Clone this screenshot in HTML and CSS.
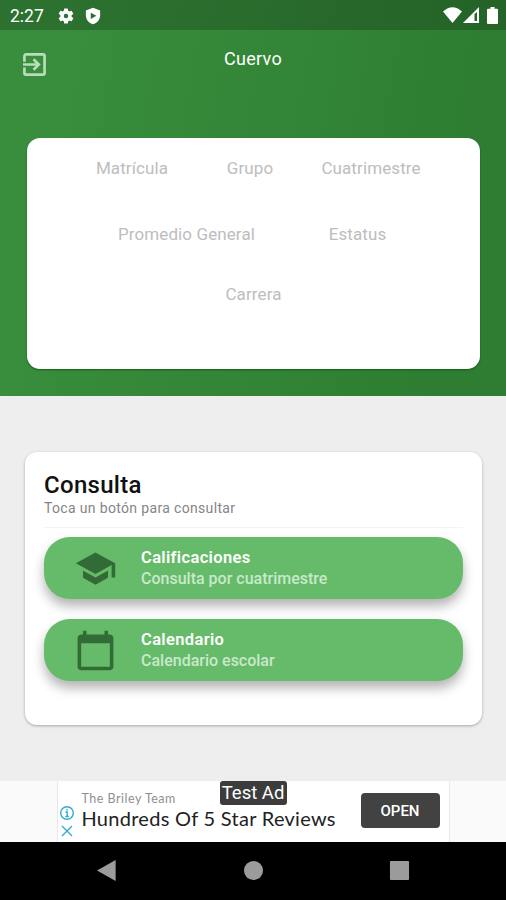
FILE: index.html
```html
<!DOCTYPE html>
<html lang="es">
  <head>
    <meta charset="UTF-8" />
    <meta name="viewport" content="width=device-width, initial-scale=1.0" />
    <title>Cuervo</title>
    <link rel="stylesheet" href="styles.css">
  </head>
  <body>
    <header class="header">
      <div class="status-bar">
        <span class="time">2:27</span>
        <svg class="status-gear" viewBox="0 0 24 24">
          <path fill-rule="evenodd" d="M19.4 13a7.500 7.500 0 0 0 0-2l2.100-1.650a.5.5 0 0 0 .12-.64l-2-3.460a.5.5 0 0 0-.61-.22l-2.490 1a7.300 7.300 0 0 0-1.690-.98l-.38-2.650A.49.49 0 0 0 14 2h-4a.49.49 0 0 0-.49.42l-.38 2.650c-.61.25-1.170.59-1.690.98l-2.490-1a.5.5 0 0 0-.61.22l-2 3.460a.5.5 0 0 0 .12.64L4.570 11a7.900 7.900 0 0 0 0 2l-2.110 1.650a.5.5 0 0 0-.12.64l2 3.460c.12.22.39.3.61.22l2.490-1c.52.4 1.080.73 1.690.98l.38 2.650c.03.24.24.42.49.42h4c.25 0 .46-.18.49-.42l.38-2.650c.61-.25 1.170-.59 1.690-.98l2.490 1c.23.09.49 0 .61-.22l2-3.460a.5.5 0 0 0-.12-.64zM12 15a3 3 0 1 1 0-6 3 3 0 0 1 0 6z" />
        </svg>
        <svg class="status-shield" viewBox="0 0 24 24">
          <path fill-rule="evenodd" d="M12 1 2.500 4.500V11c0 5.800 4 10.500 9.500 12 5.500-1.500 9.500-6.200 9.500-12V4.500zM9 7.500l7.500 4.300L9 16z" />
        </svg>
        <div class="status-right">
          <svg width="19" height="16" viewBox="0 0 19 16">
            <path d="M9.500 16 0 4.500Q9.500-4 19 4.500z" />
          </svg>
          <svg width="16" height="16" viewBox="0 0 16 16">
            <path fill-rule="evenodd" d="M0 16 16 0v16zM11.500 7v7h2.500V5z" />
          </svg>
          <svg class="battery" width="11" height="17" viewBox="0 0 11 17">
            <path d="M3.500 0h4v1.700H10a1 1 0 0 1 1 1V16a1 1 0 0 1-1 1H1a1 1 0 0 1-1-1V2.700a1 1 0 0 1 1-1h2.500z" />
          </svg>
        </div>
      </div>
      <div class="app-bar">
        <svg class="exit" viewBox="0 0 24 24">
          <path d="M1.500 9V3A1.500 1.500 0 0 1 3 1.500h18A1.500 1.500 0 0 1 22.500 3v18a1.500 1.500 0 0 1-1.500 1.500H3A1.500 1.500 0 0 1 1.500 21v-6M0 12h16M11 6.500l5.500 5.500-5.500 5.500" />
        </svg>
        <h1 class="user">Cuervo</h1>
      </div>
      <div class="info-card">
        <div class="row row-three">
          <span>Matrícula</span>
          <span>Grupo</span>
          <span>Cuatrimestre</span>
        </div>
        <div class="row row-two">
          <span>Promedio General</span>
          <span>Estatus</span>
        </div>
        <div class="row row-one">
          <span>Carrera</span>
        </div>
      </div>
    </header>

    <main class="content">
      <section class="consulta">
        <h2>Consulta</h2>
        <p class="hint">Toca un botón para consultar</p>
        <a class="option" href="#calificaciones">
          <svg viewBox="0 0 24 24">
            <path d="M5 13.180v4L12 21l7-3.820v-4L12 17l-7-3.820zM12 3 1 9l11 6 9-4.910V17h2V9L12 3z" />
          </svg>
          <span class="option-text">
            <b>Calificaciones</b>
            <span>Consulta por cuatrimestre</span>
          </span>
        </a>
        <a class="option" href="#calendario">
          <svg viewBox="0 0 24 24">
            <path d="M20 3h-1V1h-2v2H7V1H5v2H4c-1.100 0-2 .9-2 2v16c0 1.100.9 2 2 2h16c1.100 0 2-.9 2-2V5c0-1.100-.9-2-2-2zm0 18H4V8h16v13z" />
          </svg>
          <span class="option-text">
            <b>Calendario</b>
            <span>Calendario escolar</span>
          </span>
        </a>
      </section>
    </main>

    <aside class="ad">
      <div class="ad-inner">
        <div class="ad-marks">
          <svg viewBox="0 0 14 14">
            <circle cx="7" cy="7" r="6.300" />
            <path d="M5.500 6h1.700v4.500M5.300 10.500h3.600M7 3v1.500" />
          </svg>
          <svg viewBox="0 0 14 14">
            <path d="M2 2l10 10M12 2 2 12" />
          </svg>
        </div>
        <div class="ad-text">
          <span class="ad-brand">The Briley Team</span>
          <span class="ad-title">Hundreds Of 5 Star Reviews</span>
        </div>
        <button class="ad-open">OPEN</button>
        <span class="test-ad">Test Ad</span>
      </div>
    </aside>

    <nav class="nav-bar">
      <svg viewBox="0 0 22 22"><path d="M19.500 0v22L0 11z" /></svg>
      <svg viewBox="0 0 22 22"><circle cx="11" cy="11" r="10" /></svg>
      <svg viewBox="0 0 22 22"><rect x="1" y="1" width="20" height="20" rx="1" /></svg>
    </nav>
  </body>
</html>
```
FILE: styles.css
```css
* {
  box-sizing: border-box;
}
body {
  font-family: Roboto, "Liberation Sans", sans-serif;
  background-color: #eee;
  margin: 0;
  height: 900px;
  display: flex;
  flex-direction: column;
  overflow: hidden;
}
h1,
h2,
p {
  margin: 0;
}
svg {
  display: block;
  flex-shrink: 0;
}
.header {
  height: 396px;
  background: linear-gradient(100deg, #388e3c 12%, #2e7d32 88%);
}
.status-bar {
  display: flex;
  align-items: center;
  height: 30px;
  padding: 1px 8px 0 10px;
  background: rgba(0, 0, 0, 0.2);
  color: #fff;
  fill: #fff;
}
.time {
  width: 47px;
  font-size: 17.5px;
}
.status-gear {
  width: 18px;
  height: 18px;
}
.status-shield {
  width: 18px;
  height: 18px;
  margin-left: 9px;
}
.status-right {
  display: flex;
  gap: 1px;
  margin-left: auto;
}
.battery {
  margin-left: 7px;
}
.app-bar {
  display: grid;
  grid-template-columns: 23px 1fr 23px;
  height: 108px;
  padding: 18px 23px 0;
}
.exit {
  width: 23px;
  height: 23px;
  margin-top: 5px;
  fill: none;
  stroke: #b9dcbb;
  stroke-width: 2.8;
}
.user {
  color: #fff;
  font-size: 18px;
  font-weight: 400;
  line-height: 22px;
  letter-spacing: 0.3px;
  text-align: center;
}
.info-card {
  height: 231px;
  margin: 0 26px 0 27px;
  padding-top: 19px;
  border-radius: 13px;
  background: #fff;
  box-shadow: 0 1px 2px rgba(0, 80, 0, 0.7);
  color: #bdbdbd;
  font-size: 17px;
  line-height: 22px;
  letter-spacing: 0.1px;
}
.row {
  display: grid;
  text-align: center;
}
.row-three {
  grid-template-columns: 118px 118px 124px;
  padding-left: 46px;
}
.row-two {
  grid-template-columns: 171px 171px;
  margin-top: 44px;
  padding-left: 74px;
}
.row-one {
  margin-top: 38px;
}
.content {
  height: 385px;
  padding: 56px 24px 0 25px;
}
.consulta {
  height: 273px;
  padding: 18px 19px 0;
  border-radius: 12px;
  background: #fff;
  box-shadow: 0 1px 3px rgba(0, 0, 0, 0.3);
}
.consulta h2 {
  color: #111;
  font-size: 24px;
  font-weight: 500;
  line-height: 30px;
  letter-spacing: 0.3px;
}
.hint {
  height: 28px;
  margin-bottom: 9px;
  border-bottom: 1px solid #f4f4f4;
  color: #858585;
  font-size: 14px;
  line-height: 17px;
  letter-spacing: 0.34px;
}
.option {
  display: flex;
  align-items: center;
  height: 62px;
  margin-bottom: 20px;
  padding-left: 30px;
  border-radius: 26px;
  background: #66bb6a;
  box-shadow: 0 7px 12px rgba(0, 0, 0, 0.3);
  color: #fff;
  text-decoration: none;
}
.option svg {
  width: 43px;
  height: 43px;
  fill: #336b37;
}
.option-text {
  display: flex;
  flex-direction: column;
  margin-left: 24px;
  font-size: 16px;
  font-weight: 500;
  line-height: 21px;
}
.option-text b {
  font-size: 16.5px;
  font-weight: 600;
  letter-spacing: 0.35px;
}
.option-text span {
  color: #c8e9ca;
}
.ad {
  height: 61px;
  background: #fafafa;
}
.ad-inner {
  position: relative;
  display: flex;
  width: 393px;
  height: 61px;
  margin: 0 auto;
  padding-left: 2px;
  border: 1px solid #e8e8e8;
  border-width: 0 1px;
  background: #fff;
}
.ad-marks {
  display: flex;
  flex-direction: column;
  gap: 4px;
  padding-top: 25px;
}
.ad-marks svg {
  width: 14px;
  height: 14px;
  fill: none;
  stroke: #35a9d1;
  stroke-width: 1.4;
}
.ad-text {
  display: flex;
  flex-direction: column;
  width: 287px;
  padding: 10px 0 0 8px;
  font-family: Lato, sans-serif;
  white-space: nowrap;
}
.ad-brand {
  color: #909090;
  font-size: 12.5px;
  line-height: 16px;
  letter-spacing: 0.5px;
}
.ad-title {
  color: #222;
  font-size: 20px;
  line-height: 23px;
  letter-spacing: 0.28px;
}
.ad-open {
  width: 79px;
  height: 35px;
  margin-top: 12px;
  padding: 0;
  border: 0;
  border-radius: 4px;
  background: #424242;
  color: #fff;
  font-family: Roboto, sans-serif;
  font-size: 15px;
  font-weight: 500;
}
/* sits over the banner */
.test-ad {
  position: absolute;
  top: 0;
  left: 162px;
  width: 67px;
  height: 24px;
  border-radius: 3px;
  background: #3c3c3c;
  color: #fff;
  font-size: 18.5px;
  line-height: 25px;
  text-align: center;
}
.nav-bar {
  display: flex;
  justify-content: center;
  gap: 125px;
  height: 58px;
  padding-top: 18px;
  background: #000;
  fill: #9b9b9b;
}
.nav-bar svg {
  width: 21px;
  height: 21px;
}
```
